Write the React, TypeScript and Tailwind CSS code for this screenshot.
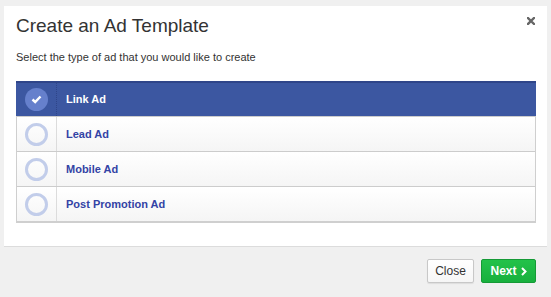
import { useState } from "react";

const adTypes = ["Link Ad", "Lead Ad", "Mobile Ad", "Post Promotion Ad"];

export default function App() {
  const [selected, setSelected] = useState(0);

  return (
    <div className="w-[551px] h-[297px] bg-[#f0f0f0] pt-[6px] px-[4px] font-['Liberation_Sans',Arial,sans-serif] overflow-hidden">
      {/* Dialog body */}
      <div className="relative bg-white h-[241px] border-b border-[#dcdcdc] px-[12px] pt-[8px]">
        <button className="absolute right-[12px] top-[11px]">
          <svg width="8" height="8" viewBox="0 0 8 8">
            <path d="M1 1L7 7M7 1L1 7" stroke="#666" strokeWidth="2.4" strokeLinecap="square" />
          </svg>
        </button>
        <h1 className="text-[19px] leading-[24px] text-[#333]">Create an Ad Template</h1>
        <p className="mt-[11px] text-[11px] leading-[16px] text-[#333]">
          Select the type of ad that you would like to create
        </p>

        {/* Ad type list */}
        <div className="mt-[16px] w-[520px] shadow-[0_2px_0_#cfcfcf] border-x border-[#cfcfcf]">
          {adTypes.map((label, i) => {
            const active = i === selected;
            return (
              <div
                key={label}
                onClick={() => setSelected(i)}
                className={
                  active
                    ? "flex h-[35px] items-stretch bg-[#3c57a1] border-t-2 border-[#2f4589] -mx-px cursor-pointer"
                    : "flex h-[35px] items-stretch bg-gradient-to-b from-white to-[#f5f5f5] border-t border-[#cccccc] cursor-pointer"
                }
              >
                <div
                  className={
                    active
                      ? "w-[41px] flex items-center justify-center border-r border-dotted border-[#2f4589]"
                      : "w-[40px] flex items-center justify-center border-r border-[#dcdcdc]"
                  }
                >
                  {active ? (
                    <span className="w-[23px] h-[23px] rounded-full bg-[#6680cc] flex items-center justify-center">
                      <svg width="11" height="9" viewBox="0 0 11 9">
                        <path d="M1.5 4.5L4.2 7L9.5 1.5" fill="none" stroke="white" strokeWidth="2.4" />
                      </svg>
                    </span>
                  ) : (
                    <span className="w-[23px] h-[23px] rounded-full border-[3px] border-[#c2cdea]" />
                  )}
                </div>
                <div
                  className={
                    active
                      ? "flex items-center pl-[9px] text-[11px] font-bold text-white"
                      : "flex items-center pl-[9px] text-[11px] font-bold text-[#3343a5]"
                  }
                >
                  {label}
                </div>
              </div>
            );
          })}
        </div>
      </div>

      {/* Footer */}
      <div className="flex justify-end gap-[7px] pt-[12px] pr-[11px]">
        <button className="w-[47px] h-[24px] bg-gradient-to-b from-white to-[#f6f6f6] border border-[#c8c8c8] rounded-[2px] text-[12px] text-[#333] shadow-[0_1px_1px_rgba(0,0,0,0.08)]">
          Close
        </button>
        <button className="w-[55px] h-[24px] bg-gradient-to-b from-[#23c24a] to-[#18b03e] border border-[#159a36] rounded-[2px] text-[12px] font-bold text-white flex items-center justify-center gap-[4px]">
          Next
          <svg width="6" height="9" viewBox="0 0 6 9">
            <path d="M1 1L4.5 4.5L1 8" fill="none" stroke="white" strokeWidth="2" />
          </svg>
        </button>
      </div>
    </div>
  );
}
